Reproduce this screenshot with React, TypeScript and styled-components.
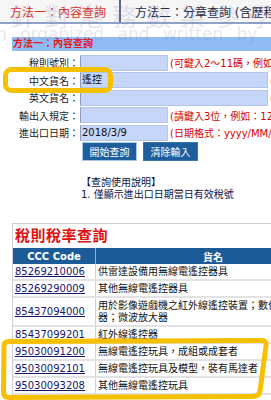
import React from 'react';
import styled, { createGlobalStyle } from 'styled-components';

const Global = createGlobalStyle`
  html, body { margin: 0; padding: 0; background: #fff; overflow: hidden; }
  body {
    font-family: "DejaVu Sans", "Noto Sans CJK TC", sans-serif;
    font-size: 10px;
    color: #111;
  }
`;

const CJK = `"DejaVu Sans", "Noto Sans CJK TC", sans-serif`;

const Page = styled.div`
  position: relative;
  width: 271px;
  height: 400px;
  overflow: hidden;
`;

const TabBar = styled.div`
  display: flex;
  height: 22px;
  border-bottom: 2px solid #8ea3c6;
  background: #f6f6f6;
  white-space: nowrap;
`;

const Tab = styled.div<{ $active?: boolean }>`
  flex: none;
  display: flex;
  align-items: center;
  box-sizing: border-box;
  width: ${p => (p.$active ? '121px' : 'auto')};
  padding-left: ${p => (p.$active ? '10px' : '14px')};
  font-family: ${CJK};
  font-size: 12px;
  color: ${p => (p.$active ? '#e0301e' : '#1c2a44')};
  border-right: ${p => (p.$active ? '2px solid #5d6a80' : 'none')};
`;

const SectionBar = styled.div`
  margin: 13px 0 0 12px;
  height: 14px;
  line-height: 14px;
  padding-left: 1px;
  background: #8fbcf2;
  color: #e41818;
  font-weight: bold;
  font-size: 10px;
  white-space: nowrap;
`;

const Form = styled.div`
  margin-top: 3px;
  display: grid;
  grid-template-columns: 80px 1fr;
  grid-auto-rows: 17.5px;
`;

const Label = styled.div`
  text-align: right;
  padding-right: 1px;
  align-self: center;
  white-space: nowrap;
  font-size: 10px;
  color: #1a1a1a;
`;

const Field = styled.div`
  display: flex;
  align-items: center;
  white-space: nowrap;
  overflow: hidden;
`;

const Input = styled.div<{ $w: number }>`
  flex: none;
  box-sizing: border-box;
  width: ${p => p.$w}px;
  height: 16px;
  line-height: 14px;
  padding-left: 1px;
  background: #c6d6f8;
  border: 1px solid #b4c5ea;
  border-left-color: #8d9cbc;
  font-size: 10px;
  color: #111;
`;

const Hint = styled.span`
  margin-left: 2px;
  color: #d40000;
  font-size: 10px;
`;

const Buttons = styled.div`
  display: flex;
  gap: 6px;
  padding-left: 82px;
  margin-top: 0.5px;
`;

const Button = styled.div<{ $focus?: boolean }>`
  box-sizing: border-box;
  width: 55px;
  height: 19px;
  display: flex;
  align-items: center;
  justify-content: center;
  background: #1f5e9c;
  border: 1px solid ${p => (p.$focus ? '#a8c8ee' : '#3a72ad')};
  color: #fff;
  font-size: 10px;
`;

const Notes = styled.div`
  margin-top: 16px;
  padding-left: 81px;
  line-height: 12px;
  color: #12123e;
  font-size: 10px;
  white-space: nowrap;
`;

const ResultBox = styled.div`
  margin: 22px 0 0 12px;
  width: 319px;
  border-top: 1px solid #cfcfcf;
  border-left: 1px solid #cfcfcf;
`;

const Title = styled.div`
  height: 24px;
  line-height: 24px;
  padding-left: 2px;
  color: #e01010;
  font-weight: bold;
  font-size: 15px;
  letter-spacing: 0.5px;
`;

const Table = styled.table`
  width: 318px;
  border-collapse: collapse;
  table-layout: fixed;
  font-size: 10px;
`;

const Th = styled.th<{ $w?: number }>`
  width: ${p => (p.$w ? `${p.$w}px` : 'auto')};
  height: 16px;
  padding: 0;
  background: #1b5b98;
  color: #fff;
  font-weight: bold;
  text-align: center;
  border-right: 1px solid #8fb0d8;
`;

const Td = styled.td`
  padding: 2px 2px 1px 2px;
  line-height: 12px;
  vertical-align: middle;
  border-bottom: 2px solid #e2e2e2;
  border-right: 1px solid #d2d2d2;
  color: #111;
`;

const Code = styled.a`
  color: #16166a;
  text-decoration: underline;
`;

const Watermark = styled.div`
  position: absolute;
  left: 0;
  top: 0;
  width: 271px;
  pointer-events: none;
  color: rgba(130, 120, 175, 0.2);
  white-space: nowrap;
`;

const WmCJK = styled.div`
  display: flex;
  gap: 9px;
  padding-left: 10px;
  font-family: "Noto Sans CJK TC", sans-serif;
  font-size: 25px;
  line-height: 28px;
  margin-top: 1px;
`;

const WmLatin = styled.div`
  margin-left: -4px;
  margin-top: -4px;
  font-family: "DejaVu Sans", sans-serif;
  font-size: 17px;
  word-spacing: 8px;
  line-height: 18px;
`;

const Marks = styled.svg`
  position: absolute;
  left: 0;
  top: 0;
  pointer-events: none;
`;

const rows: { code: string; name: string }[] = [
  { code: '85269210006', name: '供雷達設備用無線電遙控器具' },
  { code: '85269290009', name: '其他無線電遙控器具' },
  { code: '85437094000', name: '用於影像遊戲機之紅外線遙控裝置；數位式聲頻放大器；微波放大器' },
  { code: '85437099201', name: '紅外線遙控器' },
  { code: '95030091200', name: '無線電遙控玩具，成組或成套者' },
  { code: '95030092101', name: '無線電遙控玩具及模型，裝有馬達者' },
  { code: '95030093208', name: '其他無線電遙控玩具' },
];

export default function App() {
  return (
    <Page>
      <Global />
      <TabBar>
        <Tab $active>方法一：內容查詢</Tab>
        <Tab>方法二：分章查詢 (含歷程)</Tab>
      </TabBar>
      <SectionBar>方法一：內容查詢</SectionBar>
      <Form>
        <Label>稅則號別：</Label>
        <Field>
          <Input $w={88} />
          <Hint>(可鍵入2～11碼，例如</Hint>
        </Field>
        <Label>中文貨名：</Label>
        <Field>
          <Input $w={188}>遙控</Input>
          <Hint>(可</Hint>
        </Field>
        <Label>英文貨名：</Label>
        <Field>
          <Input $w={188} />
          <Hint>(可</Hint>
        </Field>
        <Label>輸出入規定：</Label>
        <Field>
          <Input $w={88} />
          <Hint>(請鍵入3位，例如：121</Hint>
        </Field>
        <Label>進出口日期：</Label>
        <Field>
          <Input $w={88}>2018/3/9</Input>
          <Hint>(日期格式：yyyy/MM/dd)</Hint>
        </Field>
      </Form>
      <Buttons>
        <Button $focus>開始查詢</Button>
        <Button>清除輸入</Button>
      </Buttons>
      <Notes>
        <div>【查詢使用說明】</div>
        <div>1. 僅顯示進出口日期當日有效稅號</div>
      </Notes>
      <ResultBox>
        <Title>稅則稅率查詢</Title>
        <Table>
          <thead>
            <tr>
              <Th $w={82}>CCC Code</Th>
              <Th>貨名</Th>
            </tr>
          </thead>
          <tbody>
            {rows.map(r => (
              <tr key={r.code}>
                <Td>
                  <Code>{r.code}</Code>
                </Td>
                <Td>{r.name}</Td>
              </tr>
            ))}
          </tbody>
        </Table>
      </ResultBox>
      <Watermark>
        <WmCJK>
          <span>針</span>
          <span>對</span>
          <span>港</span>
          <span>務</span>
          <span>數</span>
          <span>某</span>
          <span>參</span>
          <span>學</span>
        </WmCJK>
        <WmLatin>n organized and written by c</WmLatin>
      </Watermark>
      <Marks width="271" height="400" viewBox="0 0 271 400">
        <rect x="5.5" y="69.5" width="105" height="21" rx="6" fill="none" stroke="#f6c000" strokeWidth="5" />
        <path
          d="M 4 346 Q 4 341.5 9 341.5 L 262 340.5 Q 267 340.5 266 346 L 260 391 Q 259 396.5 253 396.5 L 9 397.5 Q 3.5 397.5 3.5 392 Z"
          fill="none"
          stroke="#f6c000"
          strokeWidth="5"
          strokeLinejoin="round"
        />
      </Marks>
    </Page>
  );
}
